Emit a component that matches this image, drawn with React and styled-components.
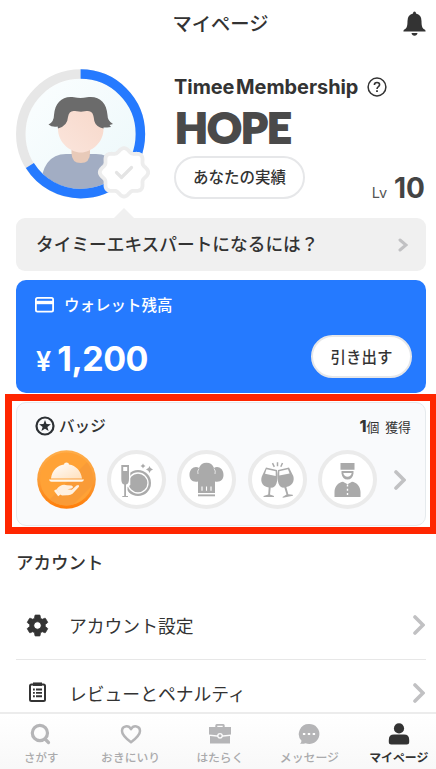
import React from "react";
import styled, { createGlobalStyle } from "styled-components";

const Global = createGlobalStyle`
  * { box-sizing: border-box; }
  body { margin: 0; background: #fff; overflow: hidden; }
  h1, h2 { margin: 0; }
  button { padding: 0; font: inherit; color: inherit; background: none; border: 0; }
  svg { display: block; flex: none; }
`;

const Page = styled.div`
  position: relative;
  display: flex;
  flex-direction: column;
  width: 436px;
  height: 769px;
  overflow: hidden;
  background: #fff;
  color: #333;
  font-family: Inter, "Noto Sans CJK JP", sans-serif;
`;

const Text = styled.span`
  display: block;
  white-space: nowrap;
  font-family: ${(p) => p.$font || '"Noto Sans CJK JP", sans-serif'};
  font-size: ${(p) => p.$size}px;
  font-weight: ${(p) => p.$weight || 400};
  line-height: ${(p) => p.$line || 24}px;
  letter-spacing: ${(p) => p.$track || 0}px;
  padding-bottom: ${(p) => p.$lift || 0}px;
  color: ${(p) => p.$color || "#333"};
`;

const ProgramName = styled(Text)`
  word-spacing: -3px;
`;

const RankName = styled(Text)`
  -webkit-text-stroke: 2px #4a4a4a;
`;

const Header = styled.header`
  display: grid;
  grid-template-columns: 1fr auto 1fr;
  align-items: center;
  height: 46px;
  padding: 0 10px 0 15px;
  & > :first-child { grid-column: 2; }
  & > svg { justify-self: end; margin-top: 1px; }
`;

const Profile = styled.section`
  display: flex;
  height: 172px;
  padding: 23px 11px 0 16px;
`;

const ProfileInfo = styled.div`
  flex: 1;
  display: flex;
  flex-direction: column;
  margin-left: 24px;
`;

const Membership = styled.div`
  display: flex;
  align-items: center;
  gap: 9px;
  height: 35px;
`;

const RankRow = styled.div`
  height: 46px;
  padding-left: 1px;
`;

const ProfileBottom = styled.div`
  display: flex;
  justify-content: space-between;
  align-items: flex-start;
  margin-top: 6px;
`;

const Pill = styled.button`
  display: flex;
  align-items: center;
  justify-content: center;
  width: ${(p) => p.$width}px;
  height: 43px;
  background: #fff;
  border: 2px solid #e6e7e9;
  border-radius: 22px;
`;

const Level = styled.div`
  display: flex;
  align-items: baseline;
  gap: 7px;
  margin-top: 20px;
`;

const ExpertBanner = styled.section`
  position: relative;
  display: flex;
  align-items: center;
  justify-content: space-between;
  height: 53px;
  margin: 0 10px 0 16px;
  padding: 0 18px 0 20px;
  background: #f0f0f0;
  border-radius: 9px;
  &::before {
    content: "";
    position: absolute;
    left: 98px;
    top: -10px;
    border: 10px solid transparent;
    border-top: 0;
    border-bottom-color: #f0f0f0;
  }
`;

const Wallet = styled.section`
  display: flex;
  flex-direction: column;
  height: 113px;
  margin: 9px 10px 0 16px;
  padding: 13px 14px 0 19px;
  background: #257aff;
  border-radius: 10px;
`;

const WalletTitle = styled.div`
  display: flex;
  align-items: center;
  gap: 10px;
  height: 24px;
`;

const WalletRow = styled.div`
  display: flex;
  align-items: center;
  justify-content: space-between;
  margin-top: 18px;
`;

const Amount = styled.div`
  display: flex;
  align-items: baseline;
  gap: 6px;
  padding: 7px 0 0 1px;
`;

const BadgeCard = styled.section`
  height: 124px;
  margin: 9px 10px 0 16px;
  padding: 11px 14px 0 18px;
  background: #f9fafc;
  border: 1px solid #e6eaed;
  border-radius: 10px;
`;

const BadgeHeader = styled.div`
  display: flex;
  align-items: center;
  height: 24px;
  gap: 4px;
`;

const Earned = styled.div`
  display: flex;
  align-items: baseline;
  margin-left: auto;
  word-spacing: 3px;
`;

const BadgeList = styled.div`
  display: flex;
  align-items: center;
  gap: 11.2px;
  margin: 12px 0 0 2px;
  & > svg:last-child { margin-left: 6px; }
`;

const Highlight = styled.div`
  position: absolute;
  left: 5px;
  top: 394px;
  width: 432px;
  height: 140px;
  border: 7px solid #ff2600;
`;

const Account = styled.section`
  flex: 1;
  min-height: 0;
  overflow: hidden;
  margin: 0 10px 0 16px;
  padding-top: 24px;
`;

const AccountTitle = styled(Text)`
  margin-bottom: 20px;
`;

const MenuRow = styled.div`
  display: flex;
  align-items: center;
  height: ${(p) => p.$height}px;
  padding: 0 1px ${(p) => p.$shift || 0}px 10px;
  border-bottom: 1px solid #e7e7e7;
  & > span { margin-left: 20px; }
  & > svg:last-child { margin-left: auto; }
`;

const TabBar = styled.nav`
  display: grid;
  grid-template-columns: repeat(5, 1fr);
  flex: none;
  height: 57px;
  padding-top: 8px;
  margin: 0 -7.5px 0 -3.5px;
  border-top: 2px solid #ececec;
  background: linear-gradient(#fff, #f8f8f8);
`;

const Tab = styled.div`
  display: flex;
  flex-direction: column;
  align-items: center;
  gap: 1px;
`;

const Chevron = ({ w = 12, h = 20, stroke = 3.6, color = "#c1c1c3" }) => (
  <svg width={w} height={h} viewBox={`0 0 ${w} ${h}`} fill="none">
    <path d={`M2 2 L${w - 2} ${h / 2} L2 ${h - 2}`} stroke={color} strokeWidth={stroke} strokeLinecap="round" strokeLinejoin="miter" />
  </svg>
);

const Bell = () => (
  <svg width="23" height="26" viewBox="0 0 23 26" fill="#333">
    <path d="M10 2.5Q10 .6 11.5 .6T13 2.5Q18.5 3.7 18.5 10C18.5 16 19.5 17.5 22 18.7Q22.6 19 22.6 20.6H.4Q.4 19 1 18.7C3.500 17.500 4.500 16 4.500 10Q4.500 3.700 10 2.500Z" />
    <path d="M8.500 22h6Q14 24.800 11.500 24.800T8.500 22Z" />
  </svg>
);

const sealPath = (() => {
  const pts = [];
  for (let i = 0; i <= 160; i++) {
    const a = (i / 160) * Math.PI * 2;
    const r = 22.3 + 1.9 * Math.cos(a * 8);
    pts.push(`${(124 + r * Math.sin(a)).toFixed(2)} ${(172.3 - r * Math.cos(a)).toFixed(2)}`);
  }
  return `M${pts.join("L")}Z`;
})();

const Avatar = () => (
  <svg width="134" height="130" viewBox="16 69 134 130" fill="none">
    <defs>
      <linearGradient id="avatarBg" x1="0" y1="0" x2="1" y2="1"><stop stopColor="#fbfeff" /><stop offset="1" stopColor="#ecf8fa" /></linearGradient>
      <linearGradient id="skin" x1="1" y1="0" x2="0" y2="1"><stop stopColor="#f7d8ca" /><stop offset="1" stopColor="#fbe5dc" /></linearGradient>
      <clipPath id="avatarClip"><circle cx="80.6" cy="133.9" r="55.2" /></clipPath>
    </defs>
    <circle cx="80.6" cy="133.9" r="55.2" fill="url(#avatarBg)" />
    <g clipPath="url(#avatarClip)">
      <path d="M40 192Q41 154 66 154H96Q121 154 122 192Z" fill="#a2adc3" />
      <path d="M71.500 145H90V153Q90 163 80.800 163T71.500 153Z" fill="#e8cab9" />
      <path d="M58 108H103.500V129C103.500 143 91 152.500 80.800 152.500S58 143 58 129Z" fill="url(#skin)" />
      <path d="M48.500 124.500Q54 122 54 115C55 102 63 95.500 74 97.300Q80.500 98.800 87 97.300C99 95.500 106.500 102 107.500 115Q107.500 121 113 124L109.500 125L111 127Q107 127.500 103.500 127.500V128.500Q96 127 94.300 121C93.500 114 92.500 110.500 86.500 111L81 111.800L75 111Q69 110 68 117Q67.500 126 58 128.500L57.600 126.500Q52 127.500 48.500 124.500Z" fill="#6b6b6b" />
    </g>
    <circle cx="80.6" cy="133.9" r="59.8" stroke="#e7e7e7" strokeWidth="9.5" />
    <circle cx="80.6" cy="133.9" r="59.8" stroke="#257aff" strokeWidth="9.5" pathLength="360" strokeDasharray="238 122" transform="rotate(-90 80.6 133.9)" />
    <path d={sealPath} fill="#fff" stroke="#ededed" strokeWidth="3.800" strokeLinejoin="round" />
    <path d="M116.500 172.500L121.500 177.500L131.500 167.500" stroke="#e4e4e4" strokeWidth="3.200" strokeLinecap="round" strokeLinejoin="round" />
  </svg>
);

const Help = () => (
  <svg width="20" height="20" viewBox="0 0 20 20" fill="none" stroke="#333">
    <circle cx="10" cy="10" r="8.900" strokeWidth="1.500" />
    <path d="M7.400 8Q7.400 5.500 10 5.500T12.600 7.800C12.600 9.700 10 9.500 10 12" strokeWidth="1.600" />
    <path d="M10 13.200V15" strokeWidth="1.800" />
  </svg>
);

const Card = () => (
  <svg width="19" height="16" viewBox="0 0 19 16" fill="none" stroke="#fff">
    <rect x=".9" y=".9" width="17.200" height="13.800" rx="1.600" strokeWidth="1.800" />
    <path d="M1 5.500H18" strokeWidth="3.400" />
  </svg>
);

const StarBadge = () => (
  <svg width="20" height="20" viewBox="0 0 20 20">
    <circle cx="10" cy="10" r="8.500" fill="none" stroke="#2c3034" strokeWidth="2.200" />
    <path d="M10 4L11.500 8.100 15.900 8.200 12.400 10.900 13.600 15.100 10 12.700 6.400 15.100 7.600 10.900 4.100 8.200 8.500 8.100Z" fill="#2c3034" />
  </svg>
);

const Medal = ({ children }) => (
  <svg width="59" height="59" viewBox="0 0 59 59">
    <circle cx="29.500" cy="29.500" r="27.500" fill="#fff" stroke="#ebebeb" strokeWidth="4" />
    {children}
  </svg>
);

const Service = () => (
  <svg width="59" height="59" viewBox="0 0 59 59">
    <defs>
      <linearGradient id="rim" x2="0" y2="1"><stop stopColor="#ffae4b" /><stop offset=".5" stopColor="#fb9d38" /><stop offset="1" stopColor="#ff7d09" /></linearGradient>
      <linearGradient id="dish" x1="0" y1="0" x2="1" y2="1"><stop stopColor="#fff" /><stop offset="1" stopColor="#ffe0bd" /></linearGradient>
      <clipPath id="medalClip"><circle cx="29.500" cy="29" r="26.500" /></clipPath>
    </defs>
    <circle cx="29.500" cy="29.500" r="29.300" fill="url(#rim)" />
    <circle cx="29.500" cy="29" r="26.500" fill="#ffa236" />
    <path d="M52 10L10 52L30 61L61 30Z" fill="#f99b37" clipPath="url(#medalClip)" />
    <path d="M14 28.500C15 20 21 15.200 27 14.500Q27 12.500 29.500 12.500T32 14.500C39 15.500 44 21 45 28.500Z" fill="url(#dish)" />
    <path d="M12 29.500H47Q46.500 31.800 44.500 31.800H14.500Q12.500 31.800 12 29.500Z" fill="#fff7ec" />
    <path d="M19.500 39.500C22 35 27 33.800 30 35.300L34.500 35.500Q37.500 37 34.500 38.600L30.500 39.300L34.800 39.800L39.500 35.500Q42.500 34 42 36.800L35.500 43.800Q33.500 45.500 30 45.200L25 45.500L22.500 44Z" fill="#fff0df" />
    <path d="M17 40.800L19.300 39.300L23.500 44.500L21.200 46.200Z" fill="#fff3e4" />
  </svg>
);

const Dining = () => (
  <Medal>
    <g fill="#aaa">
      <circle cx="31" cy="33" r="13" />
      <circle cx="31" cy="33" r="10" fill="none" stroke="#fff" strokeWidth="1.300" />
      <path d="M13 13H23.300V35L20.500 37V48H13Z" fill="#fff" />
      <path d="M14.300 15H22V29Q22 34 19 34.500V46H21V47H15.300V46H17.200V34.500Q14.300 34 14.300 29Z" />
      <path d="M16.200 17H20.200V21H16.200Z" fill="#fff" />
      <path d="M42.500 16Q43 18.700 46 19.500Q43 20.300 42.500 23Q42 20.300 39 19.500Q42 18.700 42.500 16ZM36 13.500Q36.400 15.300 38.500 16Q36.400 16.700 36 18.500Q35.600 16.700 33.500 16Q35.600 15.300 36 13.500Z" />
    </g>
  </Medal>
);

const ChefHat = () => (
  <Medal>
    <path d="M21 43V31.500C15 32.500 12.500 29 12.500 25C12.500 18.500 18 15.500 22 18Q24 12.800 29.500 12.800T37 18C41 15.500 46.500 18.500 46.500 25C46.500 29 44 32.500 38 31.500V43Z" fill="#aaa" />
    <path d="M22 18.500Q20 21 21 24M37 18.500Q39 21 38 24" fill="none" stroke="#fff" strokeWidth=".7" />
    <path d="M25 36.500V40.800M29.500 36.500V40.800M34 36.500V40.800" stroke="#fff" strokeWidth="1.100" />
    <path d="M21 44.400H38V46.300H21Z" fill="#aaa" />
  </Medal>
);

const Cheers = () => (
  <Medal>
    <g fill="#aaa">
      <path fillRule="evenodd" d="M18 17.500L29 20C30 27 30 36.500 24 37.800L22.700 37.500L22 44.500L26 46L25.900 47H15.500L15.600 46L20.200 44.500L20.700 37.500C13 36.500 12 29.500 14.500 25ZM18.500 19.200L17 23.800L27.700 26V21.300Z" />
      <path fillRule="evenodd" d="M41 17.500L30 20C29 27 29 36.500 35 37.800L36.300 37.500L38.500 44.500L34.500 47L34.800 47.800L45 45.700L44.700 44.700L40.300 44.200L38.300 37C46 35.500 47 28.500 44.500 24.500ZM40 19.200L41.600 23.400L31.300 25.500V21.300Z" />
    </g>
    <path d="M29.500 12.300V16.300M24.500 13.200L26.300 16.800M34.500 13L32.800 16.800" stroke="#aaa" strokeWidth="1.500" />
  </Medal>
);

const Concierge = () => (
  <Medal>
    <g fill="#aaa">
      <path d="M22.500 13H36.500V19.700H22.500ZM23.500 21H35.500V23.500Q34.500 29.500 29.500 29.500T23.500 23.500Z" />
      <path d="M25.300 23H33.700Q32.800 26.800 29.500 26.800T25.300 23Z" fill="#fff" />
      <path d="M16.500 47V42C16.500 36 21 32 25 31.700L29.500 34.300L34 31.700C38 32 42.500 36 42.500 42V47Z" />
    </g>
    <path d="M29.500 34.500V47" stroke="#fff" strokeWidth="1.400" strokeDasharray="2 2.200" />
  </Medal>
);

const Gear = () => (
  <svg width="23" height="23" viewBox="1 1 22 22" fill="#333" stroke="#333" strokeWidth=".7">
    <path d="M19.430 12.980c.04-.32.070-.640.070-.980s-.030-.660-.070-.980l2.110-1.650c.190-.150.240-.420.120-.640l-2-3.460c-.120-.220-.390-.300-.610-.220l-2.490 1c-.520-.400-1.080-.730-1.690-.980l-.380-2.650C14.460 2.180 14.250 2 14 2h-4c-.250 0-.460.180-.490.420l-.380 2.650c-.610.250-1.170.590-1.690.980l-2.490-1c-.230-.090-.490 0-.610.220l-2 3.460c-.130.220-.070.490.120.640l2.110 1.650c-.040.320-.070.650-.070.980s.030.660.070.980l-2.110 1.650c-.190.150-.240.420-.120.640l2 3.460c.120.220.390.300.610.220l2.490-1c.520.400 1.080.730 1.690.980l.380 2.650c.030.240.240.420.490.420h4c.250 0 .460-.180.490-.420l.380-2.650c.610-.250 1.170-.590 1.690-.980l2.490 1c.230.090.490 0 .610-.220l2-3.460c.120-.220.070-.490-.120-.640l-2.110-1.650zM12 15.500c-1.930 0-3.500-1.570-3.500-3.500s1.570-3.500 3.500-3.500 3.500 1.570 3.500 3.500-1.570 3.500-3.500 3.500z" />
  </svg>
);

const Clipboard = () => (
  <svg width="23" height="21" viewBox="0 0 23 21" fill="none" stroke="#333">
    <rect x="4" y="2.500" width="15" height="16.500" rx="1.500" strokeWidth="2" />
    <path d="M7 2.200H16" strokeWidth="3.500" />
    <path d="M7 7.500H8.800M7 10.900H8.800M7 14.300H8.800M10 7.500H16M10 10.900H16M10 14.300H16" strokeWidth="1.900" />
  </svg>
);

const TabIcon = ({ children }) => (
  <svg width="24" height="24" viewBox="0 0 24 24" fill="none">{children}</svg>
);

const GREY = "#b5b5b7";

const tabs = [
  { label: "さがす", size: 11.4, icon: <path d="M19.500 20.500L16 17M18.500 11a7.600 7.600 0 1 1-15.200 0a7.600 7.600 0 0 1 15.200 0Z" stroke={GREY} strokeWidth="3.200" strokeLinecap="round" /> },
  { label: "おきにいり", size: 11.8, icon: <path d="M12 20.300C7 16.500 3 13.200 3 9C3 3.700 9.500 2.800 12 7.200C14.500 2.800 21 3.700 21 9C21 13.200 17 16.500 12 20.300Z" stroke={GREY} strokeWidth="2.500" strokeLinejoin="round" /> },
  { label: "はたらく", size: 11.8, icon: <g fill={GREY}><path d="M7.300 5V3.500Q7.300 2 8.800 2H15.200Q16.700 2 16.700 3.500V5H23V12.500L15 13.300Q14.500 11 12 11T9 13.300L1 12.500V5ZM9.300 5H14.700V3.800H9.300Z" fillRule="evenodd" /><path d="M2 14L9.200 14.700Q9.700 16.700 12 16.700T14.800 14.700L22 14V21.500H2Z" /><circle cx="12" cy="13.700" r="1.500" /></g> },
  { label: "メッセージ", size: 11.9, icon: <g><path d="M12 2A10 10 0 1 1 8.500 21.200Q6.500 22 3 21.700Q4.400 20.700 4.500 18.800A10 10 0 0 1 12 2Z" fill={GREY} /><path d="M5.900 12h2.400M10.800 12h2.400M15.700 12h2.400" stroke="#fff" strokeWidth="2.200" /></g> },
  { label: "マイページ", size: 11.9, active: true, icon: <g fill="#333"><circle cx="12" cy="6.400" r="5.100" /><path d="M1.800 18Q1.800 12.600 7 12.600H17Q22.200 12.600 22.200 18V20Q22.200 22.500 19.700 22.500H4.300Q1.800 22.500 1.800 20Z" /></g> },
];

export default function App() {
  return (
    <Page>
      <Global />
      <Header>
        <Text as="h1" $size={19.3} $weight={500} $lift={1}>マイページ</Text>
        <Bell />
      </Header>
      <Profile>
        <Avatar />
        <ProfileInfo>
          <Membership>
            <ProgramName $font="Inter, sans-serif" $size={19.9} $weight={700} $track={-0.02}>Timee Membership</ProgramName>
            <Help />
          </Membership>
          <RankRow>
            <RankName $font="Lato, sans-serif" $size={42.5} $weight={900} $line={46} $track={-0.7} $color="#4a4a4a">HOPE</RankName>
          </RankRow>
          <ProfileBottom>
            <Pill $width={131}><Text $size={15.5} $weight={500} $lift={4}>あなたの実績</Text></Pill>
            <Level>
              <Text $font="Inter, sans-serif" $size={14.5} $color="#555">Lv</Text>
              <Text $font="Inter, sans-serif" $size={28} $weight={700} $color="#444">10</Text>
            </Level>
          </ProfileBottom>
        </ProfileInfo>
      </Profile>
      <ExpertBanner>
        <Text $size={17.7} $weight={500} $lift={3}>タイミーエキスパートになるには？</Text>
        <Chevron w={10} h={14} stroke={3} />
      </ExpertBanner>
      <Wallet>
        <WalletTitle>
          <Card />
          <Text $size={15.5} $weight={500} $color="#fff" $lift={3}>ウォレット残高</Text>
        </WalletTitle>
        <WalletRow>
          <Amount>
            <Text $font="Inter, sans-serif" $size={27} $weight={600} $color="#fff">¥</Text>
            <Text $font="Inter, sans-serif" $size={34} $weight={700} $track={-0.5} $color="#fff">1,200</Text>
          </Amount>
          <Pill $width={101}><Text $size={15.5} $weight={500} $lift={2}>引き出す</Text></Pill>
        </WalletRow>
      </Wallet>
      <BadgeCard>
        <BadgeHeader>
          <StarBadge />
          <Text $size={15.6} $weight={500} $lift={2}>バッジ</Text>
          <Earned>
            <Text $font="Inter, sans-serif" $size={16} $weight={800}>1</Text>
            <Text $size={12.9}>個 獲得</Text>
          </Earned>
        </BadgeHeader>
        <BadgeList>
          <Service /><Dining /><ChefHat /><Cheers /><Concierge />
          <Chevron />
        </BadgeList>
      </BadgeCard>
      <Account>
        <AccountTitle as="h2" $size={17.5} $weight={500}>アカウント</AccountTitle>
        <MenuRow $height={66} $shift={3}>
          <Gear />
          <Text $size={17.8}>アカウント設定</Text>
          <Chevron />
        </MenuRow>
        <MenuRow $height={68} $shift={2}>
          <Clipboard />
          <Text $size={17.8}>レビューとペナルティ</Text>
          <Chevron />
        </MenuRow>
      </Account>
      <TabBar>
        {tabs.map((t) => (
          <Tab key={t.label}>
            <TabIcon>{t.icon}</TabIcon>
            <Text $size={t.size} $line={20} $weight={t.active ? 700 : 500} $color={t.active ? "#333" : "#aaaaac"}>{t.label}</Text>
          </Tab>
        ))}
      </TabBar>
      <Highlight />
    </Page>
  );
}
